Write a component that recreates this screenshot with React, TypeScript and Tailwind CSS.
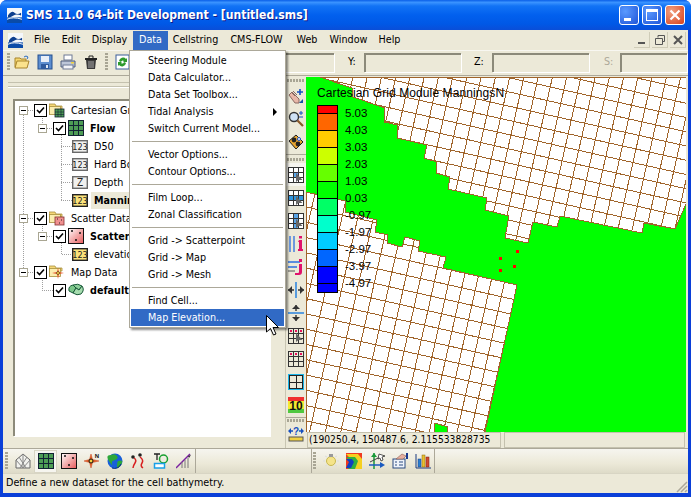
import React from 'react';

const ui = "font-['DejaVu_Sans',sans-serif] [font-stretch:condensed]";

const Ic: React.FC<{ children: React.ReactNode }> = ({ children }) => (
  <svg viewBox="0 0 16 16" className="h-4 w-4 shrink-0">{children}</svg>
);

const Logo = () => (
  <svg viewBox="0 0 16 16" className="h-[15px] w-[15px] shrink-0">
    <rect width="16" height="16" fill="#f4f7fb" />
    <rect y="10" width="16" height="6" fill="#0a4ba8" />
    <path d="M1 8 Q5 2 8 5 T15 5 V8 Q10 6 7 8 T1 10Z" fill="#0d3f8f" />
    <path d="M0 12 Q6 9 16 12" stroke="#fff" fill="none" />
  </svg>
);

const Folder = () => (
  <Ic>
    <path d="M1 13V4h5l1 1h5v2" fill="#f5d76e" stroke="#a8842c" />
    <path d="M1 14l2-7h12l-2 7z" fill="#fbe28c" stroke="#a8842c" />
    <path d="M10 3q2-2 4 0l-1 2" stroke="#2a6bc0" fill="none" />
  </Ic>
);
const Save = () => (
  <Ic>
    <rect x="1" y="1" width="14" height="14" fill="#5d8ed0" stroke="#25508f" />
    <rect x="4" y="2" width="8" height="6" fill="#e8eef8" />
    <rect x="4" y="10" width="8" height="5" fill="#2e5a9e" />
    <rect x="9" y="11" width="2" height="3" fill="#dfe8f5" />
  </Ic>
);
const Printer = () => (
  <Ic>
    <rect x="4" y="1" width="8" height="5" fill="#fff" stroke="#6e7b95" />
    <path d="M1 7h14v6H1z" fill="#bdc6d8" stroke="#4f5d7c" />
    <rect x="3" y="11" width="10" height="4" fill="#f3f4f8" stroke="#6e7b95" />
    <rect x="11" y="8" width="3" height="1.5" fill="#f2d23a" />
  </Ic>
);
const Trash = () => (
  <Ic>
    <path d="M2 4h12v2H2z" fill="#222" />
    <path d="M6 4V2h4v2" stroke="#222" fill="none" />
    <path d="M3 6h10l-1 9H4z" fill="#3a3a3a" />
    <path d="M6 7v7M8 7v7M10 7v7" stroke="#aaa" />
  </Ic>
);
const Refresh = () => (
  <Ic>
    <rect x="1" y="1" width="13" height="14" fill="#fff" stroke="#3a5f9a" />
    <path d="M4 7a4 4 0 0 1 7-2l1-1v4H8l1-1a2 2 0 0 0-3 1z" fill="#2d9a2d" />
    <path d="M11 9a4 4 0 0 1-7 2l-1 1V8h4l-1 1a2 2 0 0 0 3-1z" fill="#2d9a2d" />
  </Ic>
);

const HandMove = () => (
  <Ic>
    <path d="M1 7l3-3 7 7v4H7z" fill="#e8b7a8" stroke="#8a6a62" />
    <path d="M3 4l4 4M5 3l4 4" stroke="#8a6a62" />
    <path d="M12 1v6M9 4h6" stroke="#1650c0" strokeWidth="1.6" />
    <path d="M11 15l4-4v4z" fill="#1650a8" />
  </Ic>
);
const Magnify = () => (
  <Ic>
    <circle cx="6" cy="6" r="4.5" fill="#cfe2f5" stroke="#333" strokeWidth="1.4" />
    <path d="M9.5 9.5L15 15" stroke="#8a5a2a" strokeWidth="2.2" />
    <path d="M11 2h4M13 0v4M11 6h4" stroke="#1650c0" />
  </Ic>
);
const Paw = () => (
  <Ic>
    <path d="M1 7l7-6 7 7-7 7z" fill="#e8a530" stroke="#222" />
    <circle cx="6" cy="6" r="2.4" fill="#222" />
    <circle cx="10" cy="10" r="2.4" fill="#222" />
    <circle cx="11" cy="5" r="1.5" fill="#fff" stroke="#1650c0" />
  </Ic>
);
const GridArrow: React.FC<{ variant: number }> = ({ variant }) => (
  <Ic>
    <rect x="0.5" y="0.5" width="15" height="15" fill="#fff" />
    {variant === 0 && <rect x="6" y="6" width="5" height="5" fill="#5aa6e8" />}
    {variant === 1 && <rect x="1" y="6" width="14" height="5" fill="#2f96e0" />}
    {variant === 2 && <rect x="6" y="1" width="5" height="14" fill="#5aa6e8" />}
    <path d="M.5.5h15v15H.5zM5.5.5v15M10.5.5v15M.5 5.5h15M.5 10.5h15" stroke="#333" fill="none" shapeRendering="crispEdges" />
    <path d="M8 6v9l2.500-2h4z" fill="#666" />
  </Ic>
);
const BarsI = () => (
  <Ic>
    <path d="M2 0v16M6 0v16" stroke="#2a6fe0" strokeWidth="1.300" />
    <path d="M11 4h3v9h1v2h-5v-2h1V6h-1z" fill="#e0126c" />
    <rect x="11" y="0" width="3" height="2.500" fill="#e0126c" />
  </Ic>
);
const BarsJ = () => (
  <Ic>
    <path d="M0 3h12M0 8h9" stroke="#2a6fe0" strokeWidth="1.300" />
    <path d="M0 12h7" stroke="#555" />
    <path d="M11 5h3v8q0 3-3 3H7v-2h3q1 0 1-1z" fill="#e0126c" />
    <rect x="11" y="0" width="3" height="3" fill="#e0126c" />
  </Ic>
);
const ArrowsH = () => (
  <Ic>
    <path d="M8 0v16" stroke="#1a7be0" strokeWidth="1.400" />
    <path d="M0 8h6M10 8h6" stroke="#333" strokeWidth="1.400" />
    <path d="M4 4v8L0 8zM12 4v8l4-4z" fill="#333" />
  </Ic>
);
const ArrowsV = () => (
  <Ic>
    <path d="M0 8h16" stroke="#1a7be0" strokeWidth="1.400" />
    <path d="M8 0v6M8 10v6" stroke="#333" strokeWidth="1.400" />
    <path d="M4 4h8L8 0zM4 12h8l-4 4z" fill="#333" />
  </Ic>
);
const GridDots: React.FC<{ arrow?: boolean }> = ({ arrow }) => (
  <Ic>
    <rect x="0.500" y="0.500" width="15" height="15" fill="#ece9d8" />
    <path d="M.5.5h15v15H.5zM5.5.5v15M10.5.5v15M.5 5.5h15M.5 10.5h15" stroke="#333" fill="none" shapeRendering="crispEdges" />
    <path d="M2 2h2v2H2zM7 2h2v2H7zM12 2h2v2h-2z" fill="#e8125c" />
    {arrow && <path d="M8 5v9l2.500-2h4z" fill="#666" />}
  </Ic>
);
const Quad = () => (
  <Ic>
    <rect x="0.500" y="0.500" width="15" height="15" fill="#ece9d8" stroke="#19b4e8" />
    <path d="M1.500 1.500h13v13h-13zM8 1.500v13M1.500 8h13" stroke="#222" fill="none" shapeRendering="crispEdges" />
  </Ic>
);
const Ten = () => (
  <Ic>
    <rect width="16" height="4" fill="#f03030" />
    <rect y="4" width="16" height="8" fill="#f5ea30" />
    <rect y="12" width="16" height="4" fill="#50c840" />
    <text x="8" y="13" textAnchor="middle" fontSize="12" fontWeight="700" fontFamily="Liberation Sans" fill="#111">10</text>
  </Ic>
);
const Ruler = () => (
  <Ic>
    <path d="M1 5h4M11 5h4" stroke="#1650c0" strokeWidth="1.400" />
    <path d="M3 2v6L0 5zM13 2v6l3-3z" fill="#1650c0" />
    <text x="8" y="9" textAnchor="middle" fontSize="10" fontWeight="700" fontFamily="Liberation Sans" fill="#1650c0">?</text>
    <rect x="1" y="11" width="14" height="4" fill="#f0d040" stroke="#555" />
  </Ic>
);

const House = () => (
  <Ic>
    <path d="M1 7l7-6 7 6v8H1z" fill="#f2f2ee" stroke="#666" />
    <path d="M1 7l7 8 7-8M8 1v14M4 4l7 11M12 4L5 15" stroke="#888" fill="none" />
  </Ic>
);
const GreenGrid = () => (
  <Ic>
    <rect x="0.500" y="0.500" width="15" height="15" fill="#4d9c55" />
    <path d="M.5.5h15v15H.5zM5.5.5v15M10.5.5v15M.5 5.5h15M.5 10.5h15" stroke="#123" fill="none" shapeRendering="crispEdges" />
  </Ic>
);
const Scatter = () => (
  <Ic>
    <defs>
      <linearGradient id="sc" x1="0" y1="0" x2="1" y2="1">
        <stop offset="0" stopColor="#fff" />
        <stop offset="1" stopColor="#e85a5a" />
      </linearGradient>
    </defs>
    <rect x="0.500" y="0.500" width="15" height="15" fill="url(#sc)" stroke="#111" />
    <path d="M3 3h2M4 2v2M11 5h2M12 4v2M7 12h2M8 11v2" stroke="#111" />
  </Ic>
);
const Compass = () => (
  <Ic>
    <path d="M7 1l1.500 5.500L15 8l-6.500 1.500L7 15l-1.500-5.500L0 8l5.500-1.500z" fill="#e8652a" stroke="#c8401a" strokeWidth=".5" />
    <circle cx="7" cy="8" r="2" fill="#f5d040" stroke="#111" />
    <text x="13" y="5" textAnchor="middle" fontSize="6" fontWeight="700" fontFamily="Liberation Sans" fill="#111">N</text>
  </Ic>
);
const Globe = () => (
  <Ic>
    <circle cx="8" cy="8" r="7.500" fill="#1860d8" />
    <path d="M4 2q4-2 6 1t-2 4-3 4-3-3 2-6zM11 8q3-1 4 0t-2 5-3 0 1-5z" fill="#2ea83a" />
    <path d="M14 11a7 7 0 0 1-9 4" stroke="#0a2a78" fill="none" />
  </Ic>
);
const Wiggle = () => (
  <Ic>
    <circle cx="3" cy="4" r="1.800" fill="#222" />
    <circle cx="10" cy="2" r="1.800" fill="#222" />
    <path d="M4 5q3 2 1 5t-2 5M10 4q4 3 2 6t1 5" stroke="#d82020" strokeWidth="1.500" fill="none" />
  </Ic>
);
const TextShape = () => (
  <Ic>
    <path d="M1 1h6M4 1v6" stroke="#222" strokeWidth="1.300" />
    <circle cx="10.500" cy="6" r="4" fill="none" stroke="#18a030" strokeWidth="1.500" />
    <rect x="1.500" y="10.500" width="10" height="4.500" fill="#fff" stroke="#18a0e8" strokeWidth="1.500" />
  </Ic>
);
const Slope = () => (
  <Ic>
    <path d="M0 15L14 1" stroke="#7a20a0" strokeWidth="1.500" />
    <path d="M6 15V9M9 15V7M12 15V5" stroke="#777" />
    <path d="M13 5l2-3-3 1z" fill="#333" />
  </Ic>
);
const Bulb = () => (
  <Ic>
    <path d="M0 8h2M14 8h2M2 3l2 1M14 3l-2 1M2 13l2-1M14 13l-2-1" stroke="#ddd" />
    <circle cx="8" cy="8" r="4.500" fill="#f5e48a" stroke="#c8b850" />
    <rect x="6" y="1" width="4" height="3" fill="#9a9a9a" />
  </Ic>
);
const Contour = () => (
  <Ic>
    <rect width="16" height="16" fill="#f03a20" />
    <path d="M0 1h12l4 5v10H4l4-7z" fill="#f5d020" />
    <path d="M0 4h9l3 4-3 8H2l4-7z" fill="#30b040" />
    <path d="M0 6h6l2 3-3 6H0l3-6z" fill="#1040c0" />
  </Ic>
);
const Axes = () => (
  <Ic>
    <path d="M5 0v16" stroke="#1a9a3a" strokeWidth="1.500" />
    <path d="M2 4l3-4 3 4z" fill="#1a9a3a" />
    <path d="M0 12h13" stroke="#1a5ac0" strokeWidth="1.500" />
    <path d="M11 9l5 3-5 3z" fill="#1a5ac0" />
    <path d="M1 9l10-5" stroke="#444" />
    <path d="M10 1l6 2-3 1 1 3-2 1-1-3-2 1z" fill="#fff" stroke="#111" strokeWidth=".7" />
  </Ic>
);
const HandDoc = () => (
  <Ic>
    <rect x="1" y="6" width="12" height="9" fill="#eef3fa" stroke="#2a4a80" />
    <path d="M3 9h2M7 9h4M3 12h2M7 12h4" stroke="#2a4a80" />
    <path d="M4 6l6-5 4 2-3 3z" fill="#e8b0a0" stroke="#8a5a50" strokeWidth=".6" />
    <rect x="14" y="0" width="2" height="6" fill="#1a3a90" />
  </Ic>
);
const Chart = () => (
  <Ic>
    <path d="M1 1v14h15" stroke="#1a3a80" fill="none" />
    <rect x="3" y="6" width="3" height="8" fill="#2a7fd0" stroke="#1a3a80" strokeWidth=".5" />
    <rect x="7" y="2" width="3" height="12" fill="#e8c030" stroke="#8a6a10" strokeWidth=".5" />
    <rect x="11" y="4" width="3" height="10" fill="#d04a30" stroke="#802010" strokeWidth=".5" />
  </Ic>
);

const FolderWith: React.FC<{ children: React.ReactNode }> = ({ children }) => (
  <Ic>
    <path d="M0 13V2h6l1 2h6v3H0z" fill="#f5d878" stroke="#a8903c" strokeWidth=".8" />
    <rect x="0.500" y="4.500" width="11" height="8" fill="#fbeeb0" stroke="#a8903c" strokeWidth=".8" />
    {children}
  </Ic>
);
const Data123: React.FC<{ tone?: 'gray' | 'gold'; label?: string }> = ({ tone = 'gray', label = '123' }) => (
  <svg viewBox="0 0 16 13" className="h-[13px] w-4 shrink-0">
    <rect x="0.700" y="0.700" width="14.600" height="11.600" fill={tone === 'gold' ? '#fbe27a' : '#f0f0ee'} stroke={tone === 'gold' ? '#222' : '#6a6a6a'} strokeWidth="1.400" />
    <text x="8" y="10" textAnchor="middle" fontSize={label === 'Z' ? 10 : 9} fontFamily="DejaVu Sans" fill="#222">{label}</text>
  </svg>
);
const Coverage = () => (
  <Ic>
    <path d="M1 9Q0 4 5 3l3 3-3 5z" fill="#7cc88a" stroke="#1a5a3a" />
    <path d="M5 3q5-2 9 1l-3 4-3-2z" fill="#8ed09a" stroke="#1a5a3a" />
    <path d="M14 4q3 4-1 8-4 2-8-1l3-5 3 2z" fill="#a6dcae" stroke="#1a5a3a" />
  </Ic>
);
const Expander = () => (
  <span className="relative flex h-[9px] w-[9px] shrink-0 items-center justify-center border border-[#a9a692] bg-white">
    <span className="h-px w-[5px] bg-black" />
  </span>
);
const Check = () => (
  <span className="flex h-[13px] w-[13px] shrink-0 items-center justify-center border border-black bg-white">
    <svg viewBox="0 0 9 9" className="h-[9px] w-[9px]">
      <path d="M1 4l2.500 2.500L8 1.500" stroke="#000" strokeWidth="1.600" fill="none" />
    </svg>
  </span>
);

interface TreeRowProps {
  level: 0 | 1 | 2;
  label: string;
  icon: React.ReactNode;
  bold?: boolean;
  selected?: boolean;
  noExpander?: boolean;
}

const TreeRow: React.FC<TreeRowProps> = ({ level, label, icon, bold, selected, noExpander }) => {
  const pad = level === 0 ? 'pl-[4px]' : level === 1 ? 'pl-[23px]' : 'pl-[57px]';
  return (
    <div className={`flex h-[18px] items-center whitespace-nowrap text-[10.7px] text-black ${pad}`}>
      {level < 2 && (
        <>
          {noExpander ? <span className="w-[9px] shrink-0" /> : <Expander />}
          <span className="ml-[6px]"><Check /></span>
        </>
      )}
      <span className={level < 2 ? 'ml-[2px] flex' : 'flex'}>{icon}</span>
      <span className={`ml-[3px] px-[3px] leading-[17px] ${bold ? 'font-bold' : ''} ${selected ? 'bg-[#ece9d8]' : ''}`}>{label}</span>
    </div>
  );
};

const menuSections = [
  ['Steering Module', 'Data Calculator...', 'Data Set Toolbox...', 'Tidal Analysis', 'Switch Current Model...'],
  ['Vector Options...', 'Contour Options...'],
  ['Film Loop...', 'Zonal Classification'],
  ['Grid -> Scatterpoint', 'Grid -> Map', 'Grid -> Mesh'],
  ['Find Cell...', 'Map Elevation...'],
];

const menuBar = [
  { label: 'File', w: 'w-[28px]' },
  { label: 'Edit', w: 'w-[30px]' },
  { label: 'Display', w: 'w-[47px]' },
  { label: 'Data', w: 'w-[35px]', active: true },
  { label: 'Cellstring', w: 'w-[55px]' },
  { label: 'CMS-FLOW', w: 'w-[67px]' },
  { label: 'Web', w: 'w-[34px]' },
  { label: 'Window', w: 'w-[49px]' },
  { label: 'Help', w: 'w-[33px]' },
];

const legend = ['5.03', '4.03', '3.03', '2.03', '1.03', '0.03', '-0.97', '-1.97', '-2.97', '-3.97', '-4.97'];
const legendBands = [
  { c: 'bg-[#ff0000]', h: 'h-[8px]' },
  { c: 'bg-[#ff6600]', h: 'h-[17px]' },
  { c: 'bg-[#ffcc00]', h: 'h-[17px]' },
  { c: 'bg-[#ccff00]', h: 'h-[17px]' },
  { c: 'bg-[#66ff00]', h: 'h-[17px]' },
  { c: 'bg-[#00ff00]', h: 'h-[17px]' },
  { c: 'bg-[#00ff66]', h: 'h-[17px]' },
  { c: 'bg-[#00ffcc]', h: 'h-[17px]' },
  { c: 'bg-[#00ccff]', h: 'h-[17px]' },
  { c: 'bg-[#0066ff]', h: 'h-[17px]' },
  { c: 'bg-[#0000ff]', h: 'h-[17px]' },
  { c: 'bg-[#0000ff]', h: 'h-[8px]' },
];

const upperPoly =
  '320,77 352,88 353,97 385,108 384,122 398,125 397,138 427,145 424,158 437,162 436,173 450,177 448,189 487,198 485,210 509,216 505,238 528,243 533,222 557,227 560,216 642,233 644,223 675,229 686,204 686,77';
const lowerPoly =
  '306,192 345,201 345,212 377,220 375,232 388,235 387,243 402,247 405,237 420,241 418,251 446,257 443,268 517,285 485,432 447,432 448,427 435,423 434,432 306,432';

const cos = 0.9756;
const sin = 0.2195;

// cell lines of one grid block, anchored on a known corner; columns widen by `grow` per cell going left
const latticeLines = (ax: number, ay: number, du: number, dv: number, grow: number) => {
  const out: string[] = [];
  for (let i = -40; i <= 40; i++) {
    const u = i > 0 ? i * du : i * du - grow * i * i;
    const x = ax + u * cos;
    const y = ay + u * sin;
    out.push(`M${x + 600 * sin} ${y - 600 * cos}L${x - 600 * sin} ${y + 600 * cos}`);
    const x2 = ax - i * dv * sin;
    const y2 = ay + i * dv * cos;
    out.push(`M${x2 - 600 * cos} ${y2 - 600 * sin}L${x2 + 600 * cos} ${y2 + 600 * sin}`);
  }
  return out.join('');
};

const GridMap = () => (
  <svg viewBox="306 77 380 355" className="block h-[355px] w-[380px]">
    <defs>
      <clipPath id="upper"><polygon points={upperPoly} /></clipPath>
      <clipPath id="lower"><polygon points={lowerPoly} /></clipPath>
    </defs>
    <rect x="306" y="77" width="380" height="355" fill="#00ff00" />
    <polygon points={upperPoly} fill="#fff" />
    <polygon points={lowerPoly} fill="#fff" />
    <g stroke="#a0642a" strokeWidth="1" fill="none" shapeRendering="crispEdges">
      <path clipPath="url(#upper)" d={latticeLines(675, 229, 13.9, 13.9, 0)} />
      <path clipPath="url(#lower)" d={latticeLines(517.3, 285, 13, 14.9, 0.1)} />
      <polygon points={upperPoly} />
      <polygon points={lowerPoly} />
    </g>
    <g fill="#ff0000">
      <rect x="516" y="250" width="3" height="3" />
      <rect x="499" y="257" width="3" height="3" />
      <rect x="513" y="265" width="3" height="3" />
      <rect x="499" y="269" width="3" height="3" />
    </g>
  </svg>
);

const Field: React.FC<{ w: string }> = ({ w }) => (
  <div className={`h-[19px] border-2 border-b-0 border-r-0 border-[#8c8a7a] shadow-[1px_1px_0_#fff] ${w}`} />
);

const Grip = () => (
  <div className="h-[18px] w-[3px] shrink-0 bg-[repeating-linear-gradient(to_bottom,#a8a594_0,#a8a594_2px,transparent_2px,transparent_3px)]" />
);

const Slot: React.FC<{ children: React.ReactNode; active?: boolean }> = ({ children, active }) => (
  <div className={`flex h-[23px] w-[20px] items-center justify-center ${active ? 'bg-[#f5f4ee]' : ''}`}>{children}</div>
);

const BottomSlot: React.FC<{ children: React.ReactNode; active?: boolean }> = ({ children, active }) => (
  <div className={`flex h-[23px] w-[23px] items-center justify-center ${active ? 'bg-[#f6f5ef] shadow-[inset_0_0_0_1px_#d8d5c4]' : ''}`}>{children}</div>
);

export default function App() {
  return (
    <div className={`relative h-[497px] w-[691px] overflow-hidden rounded-t-[7px] bg-[#0a3fd8] ${ui}`}>
      {/* title bar */}
      <div className="flex h-[30px] items-center bg-[linear-gradient(to_bottom,#0a5fe8_0,#3a93ff_8%,#1273f5_20%,#0260ee_50%,#0058e6_80%,#0a4ed8_100%)] pl-[7px] pr-[6px]">
        <Logo />
        <span className="ml-[4px] whitespace-nowrap text-[12.1px] font-bold text-white [text-shadow:1px_1px_#0f1a89]">SMS 11.0 64-bit Development - [untitled.sms]</span>
        <div className="ml-auto flex gap-[3px]">
          <div className="flex h-[20px] w-[20px] items-end rounded-[3px] border border-white bg-[radial-gradient(circle_at_30%_30%,#5a9aff,#1f55d8)] pb-[3px] pl-[4px]">
            <span className="h-[3px] w-[7px] bg-white" />
          </div>
          <div className="flex h-[20px] w-[20px] items-center justify-center rounded-[3px] border border-white bg-[radial-gradient(circle_at_30%_30%,#5a9aff,#1f55d8)]">
            <span className="h-[12px] w-[12px] border border-t-[3px] border-white" />
          </div>
          <div className="flex h-[20px] w-[20px] items-center justify-center rounded-[3px] border border-white bg-[radial-gradient(circle_at_30%_30%,#f0a080,#d8401a)]">
            <svg viewBox="0 0 12 12" className="h-[12px] w-[12px]"><path d="M1.500 1.500l9 9M10.500 1.500l-9 9" stroke="#fff" strokeWidth="2.200" /></svg>
          </div>
        </div>
      </div>

      <div className="mx-[3px] flex h-[463px] flex-col bg-[#ece9d8]">
        {/* menu bar */}
        <div className="flex h-[20px] shrink-0 items-center text-[10.7px] text-black">
          <span className="ml-[5px] mr-[5px] flex w-[15px]"><Logo /></span>
          {menuBar.map((m) => (
            <span key={m.label} className={`flex h-[19px] items-center justify-center whitespace-nowrap ${m.w} ${m.active ? 'bg-[#316ac5] text-white' : ''}`}>{m.label}</span>
          ))}
          <div className="ml-auto mr-[2px] flex gap-[2px] text-[#555]">
            <span className="flex h-[16px] w-[16px] items-end justify-center border-b border-r border-[#cfccb8] pb-[3px]"><span className="h-[2px] w-[7px] bg-[#555]" /></span>
            <span className="flex h-[16px] w-[16px] items-center justify-center border-b border-r border-[#cfccb8]">
              <svg viewBox="0 0 10 10" className="h-[10px] w-[10px]"><path d="M3 2.500V.5h6.500v6H7.500M.5 3.500h7v6h-7z" stroke="#555" fill="none" /></svg>
            </span>
            <span className="flex h-[16px] w-[16px] items-center justify-center border-b border-r border-[#cfccb8]">
              <svg viewBox="0 0 10 10" className="h-[10px] w-[10px]"><path d="M1 1l8 8M9 1L1 9" stroke="#555" strokeWidth="2" /></svg>
            </span>
          </div>
        </div>

        {/* main toolbar */}
        <div className="flex h-[23px] shrink-0 items-center border-t border-[#f8f7f1]">
          <span className="ml-[4px]"><Grip /></span>
          <div className="ml-[4px] flex gap-[7px]">
            <Folder /><Save /><Printer /><Trash />
          </div>
          <span className="ml-[6px]"><Grip /></span>
          <span className="ml-[7px]"><Refresh /></span>
          <div className="ml-auto flex items-center pr-[1px] text-[10.7px]">
            <Field w="w-[120px]" />
            <span className="ml-[14px] w-[16px] text-black">Y:</span>
            <Field w="w-[97px]" />
            <span className="ml-[13px] w-[18px] text-black">Z:</span>
            <Field w="w-[97px]" />
            <span className="ml-[15px] w-[16px] text-[#aca899]">S:</span>
            <Field w="w-[67px]" />
          </div>
        </div>
        <div className="h-[3px] shrink-0 border-b border-[#aca899]" />

        {/* body */}
        <div className="flex h-[372px] shrink-0">
          <div className="flex w-[282px] shrink-0 flex-col">
            <div className="ml-[5px] mt-[6px] h-[5px] border-y border-[#c4c1ae] shadow-[0_1px_0_#fff]" />
            <div className="relative ml-[10px] mt-[12px] h-[337px] w-[257px] overflow-hidden border-2 border-b-0 border-r-0 border-[#8c8a7a] bg-white shadow-[1px_1px_0_#fff]">
              <svg className="absolute left-0 top-0 h-full w-full" viewBox="15 101 255 335">
                <path
                  d="M23 115V268M28 110H34M28 218H34M28 272H34M42 110V123M42 222V232M42 276V290H53M47 128H53M47 236H53M61 133V200M61 146H72M61 164H72M61 182H72M61 200H72M61 241V254H72"
                  stroke="#a0a0a0"
                  strokeDasharray="1 1"
                  fill="none"
                  shapeRendering="crispEdges"
                />
              </svg>
              <div className="relative">
                <TreeRow level={0} label="Cartesian Grid Module" icon={<FolderWith><rect x="6" y="7" width="9" height="8" fill="#4d9c55" stroke="#123" strokeWidth=".8" /><path d="M9 7v8M12 7v8M6 10h9M6 12.500h9" stroke="#123" strokeWidth=".6" /></FolderWith>} />
                <TreeRow level={1} label="Flow" bold icon={<GreenGrid />} />
                <TreeRow level={2} label="D50" icon={<Data123 />} />
                <TreeRow level={2} label="Hard Bottom" icon={<Data123 />} />
                <TreeRow level={2} label="Depth" icon={<Data123 label="Z" />} />
                <TreeRow level={2} label="ManningsN" bold selected icon={<Data123 tone="gold" />} />
                <TreeRow level={0} label="Scatter Data" icon={<FolderWith><rect x="6" y="7" width="9" height="8" fill="#f09090" stroke="#803030" strokeWidth=".8" /><path d="M8 9h1M12 10h1M10 13h1" stroke="#222" /></FolderWith>} />
                <TreeRow level={1} label="Scatter" bold icon={<Scatter />} />
                <TreeRow level={2} label="elevation" icon={<Data123 tone="gold" />} />
                <TreeRow level={0} label="Map Data" icon={<FolderWith><path d="M9 4l1 4 5 1-5 1-1 5-1-5-5-1 5-1z" fill="#e8552a" /><circle cx="9" cy="9" r="1.500" fill="#f5d040" stroke="#222" strokeWidth=".5" /></FolderWith>} />
                <TreeRow level={1} label="default" bold noExpander icon={<Coverage />} />
              </div>
            </div>
          </div>

          {/* vertical tools */}
          <div className="flex w-[21px] shrink-0 flex-col items-center border-l border-[#c8c5b2]">
            <div className="mt-[3px] h-[3px] w-[18px] shrink-0 bg-[repeating-linear-gradient(to_right,#a8a594_0,#a8a594_2px,transparent_2px,transparent_3px)]" />
            <div className="mt-[2px]">
              <Slot><HandMove /></Slot>
              <Slot><Magnify /></Slot>
              <Slot><Paw /></Slot>
            </div>
            <div className="h-[2px] w-full shrink-0 border-b border-[#aca899]" />
            <div className="mt-[3px] h-[3px] w-[18px] shrink-0 bg-[repeating-linear-gradient(to_right,#a8a594_0,#a8a594_2px,transparent_2px,transparent_3px)]" />
            <div className="mt-[2px]">
              <Slot active><GridArrow variant={0} /></Slot>
              <Slot><GridArrow variant={1} /></Slot>
              <Slot><GridArrow variant={2} /></Slot>
              <Slot><BarsI /></Slot>
              <Slot><BarsJ /></Slot>
              <Slot><ArrowsH /></Slot>
              <Slot><ArrowsV /></Slot>
              <Slot><GridDots arrow /></Slot>
              <Slot><GridDots /></Slot>
              <Slot><Quad /></Slot>
              <Slot><Ten /></Slot>
            </div>
            <div className="h-[2px] w-full shrink-0 border-b border-[#aca899]" />
            <div className="mt-[1px] h-[3px] w-[18px] shrink-0 bg-[repeating-linear-gradient(to_right,#a8a594_0,#a8a594_2px,transparent_2px,transparent_3px)]" />
            <Slot><Ruler /></Slot>
          </div>

          {/* graphics window */}
          <div className="flex w-[382px] shrink-0 flex-col">
            <div className="relative mt-px h-[355px] w-[380px] overflow-hidden">
              <GridMap />
              <div className="absolute left-[11px] top-[9px] whitespace-nowrap font-['Liberation_Sans',sans-serif] text-[12px] leading-[14px] tracking-[0.1px] text-black [font-stretch:normal]">Cartesian Grid Module ManningsN</div>
              <div className="absolute left-[11px] top-[28px] flex font-['Liberation_Sans',sans-serif] text-[11.5px] text-black [font-stretch:normal]">
                <div className="flex w-[21px] flex-col border border-black">
                  {legendBands.map((b, i) => (
                    <div key={i} className={`${b.c} ${b.h} border-b border-black last:border-b-0`} />
                  ))}
                </div>
                <div className="ml-[7px] flex flex-col">
                  {legend.map((v) => (
                    <span key={v} className="h-[17px] leading-[17px]">{v}</span>
                  ))}
                </div>
              </div>
            </div>
            <div className="flex h-[16px] shrink-0 items-center gap-[3px] pl-px">
              <div className="flex h-[16px] w-[194px] items-center overflow-hidden whitespace-nowrap border border-[#c4c1ae] pl-px text-[10.2px] text-black">(190250.4, 150487.6, 2.115533828735</div>
              <div className="h-[16px] w-[181px] border border-[#c4c1ae]" />
            </div>
          </div>
        </div>

        {/* lower toolbars */}
        <div className="flex h-[25px] shrink-0 border-t border-[#aca899] bg-[linear-gradient(to_bottom,#f6f5ef,#ece9d8_60%,#dedbc8)]">
          <div className="flex h-[24px] w-[193px] items-center border-r border-[#aca899]">
            <span className="ml-[2px]"><Grip /></span>
            <div className="ml-[3px] flex gap-0">
              <BottomSlot><House /></BottomSlot>
              <BottomSlot active><GreenGrid /></BottomSlot>
              <BottomSlot><Scatter /></BottomSlot>
              <BottomSlot><Compass /></BottomSlot>
              <BottomSlot><Globe /></BottomSlot>
              <BottomSlot><Wiggle /></BottomSlot>
              <BottomSlot><TextShape /></BottomSlot>
              <BottomSlot><Slope /></BottomSlot>
            </div>
          </div>
          <div className="ml-[115px] flex h-[24px] w-[124px] items-center border-x border-[#aca899]">
            <span className="ml-px"><Grip /></span>
            <div className="ml-[3px] flex">
              <BottomSlot><Bulb /></BottomSlot>
              <BottomSlot><Contour /></BottomSlot>
              <BottomSlot><Axes /></BottomSlot>
              <BottomSlot><HandDoc /></BottomSlot>
              <BottomSlot><Chart /></BottomSlot>
            </div>
          </div>
        </div>

        {/* status bar */}
        <div className="relative flex h-[20px] shrink-0 items-center border-t border-[#d8d5c4] pl-[3px] text-[10.7px] text-black">
          Define a new dataset for the cell bathymetry.
          <svg viewBox="0 0 12 12" className="absolute bottom-0 right-0 h-[12px] w-[12px]">
            <path d="M11 1L1 11M11 5l-6 6M11 9l-2 2" stroke="#aca899" strokeWidth="1.500" />
          </svg>
        </div>
      </div>

      {/* open Data menu */}
      <div className="absolute left-[129px] top-[50px] w-[157px] border border-[#aca899] bg-white p-px text-[10.7px] text-black shadow-[2px_2px_2px_rgba(0,0,0,0.45)]">
        {menuSections.map((section, s) => (
          <div key={s}>
            {section.map((item) => (
              <div key={item} className={`relative flex h-[17px] items-center whitespace-nowrap pl-[17px] pt-px ${item === 'Map Elevation...' ? 'bg-[#316ac5] text-white' : ''}`}>
                {item}
                {item === 'Tidal Analysis' && <span className="absolute right-[7px] h-0 w-0 border-y-[4px] border-l-[4px] border-y-transparent border-l-black" />}
              </div>
            ))}
            {s < menuSections.length - 1 && (
              <div className="flex h-[9px] items-center px-px"><div className="h-px w-full bg-[#aca899]" /></div>
            )}
          </div>
        ))}
      </div>

      {/* mouse pointer */}
      <svg viewBox="0 0 13 21" className="absolute left-[266px] top-[315px] h-[21px] w-[13px]">
        <path d="M.5.500V17l4-3.500L7.500 20l2.500-1-3-6.500h5.500z" fill="#fff" stroke="#000" />
      </svg>
    </div>
  );
}
